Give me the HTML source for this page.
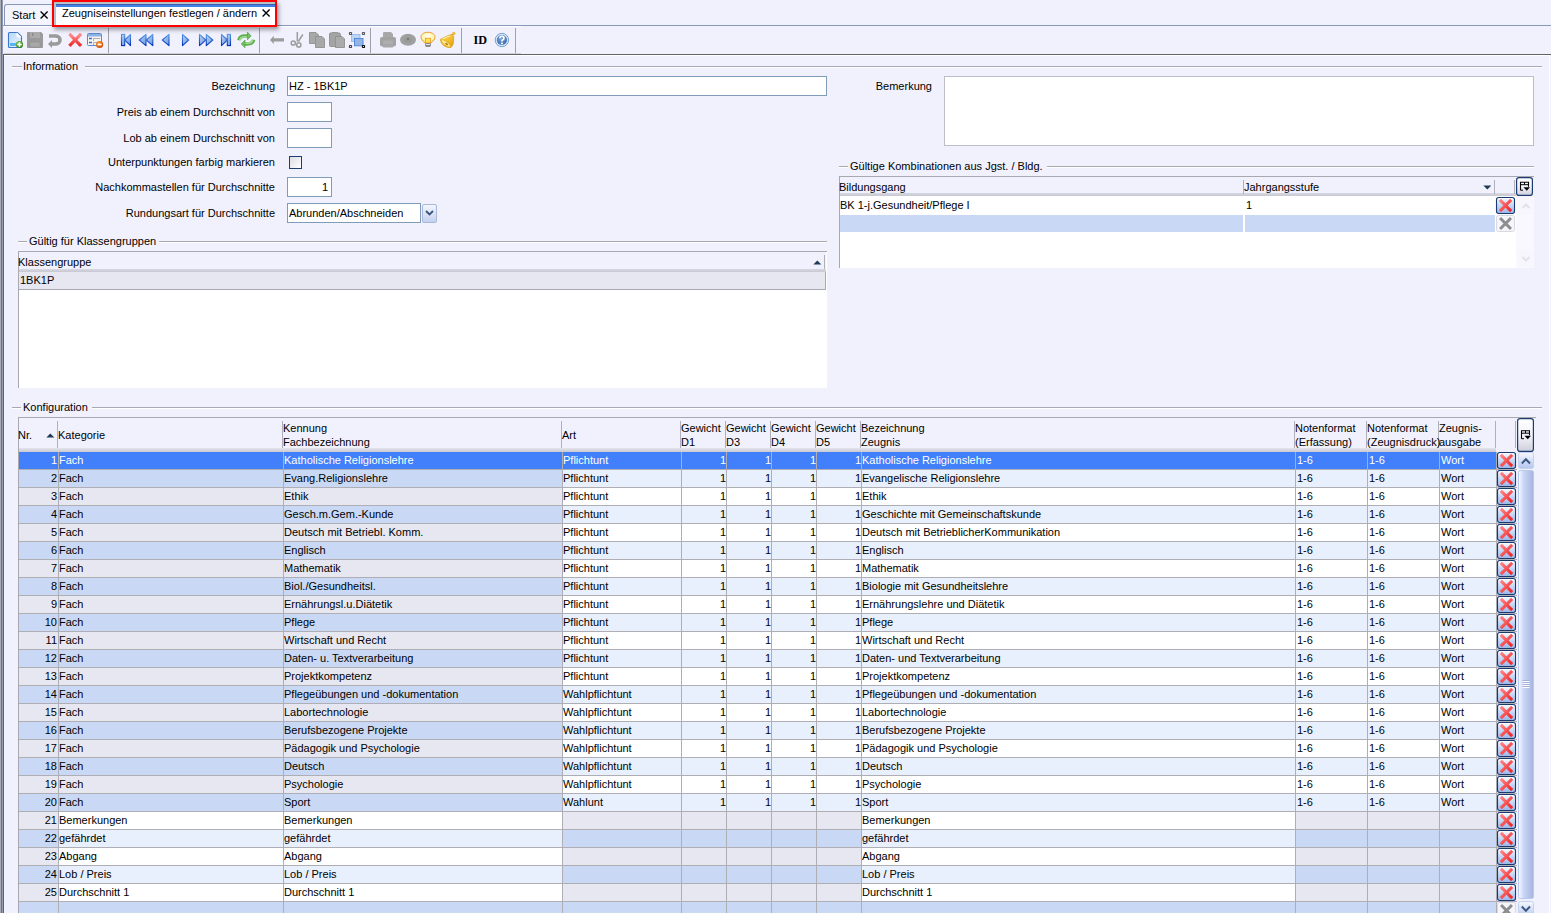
<!DOCTYPE html>
<html><head><meta charset="utf-8"><style>
html,body{margin:0;padding:0}
body{width:1551px;height:913px;overflow:hidden;position:relative;background:#F1F1FE;font-family:"Liberation Sans",sans-serif;font-size:11px;color:#000}
.a{position:absolute}
.t{position:absolute;white-space:pre;line-height:13px}
svg{position:absolute;overflow:visible}
</style></head><body>

<div class="a" style="left:0px;top:0px;width:1px;height:913px;background:#ABABB0"></div>
<div class="a" style="left:1px;top:0px;width:1px;height:913px;background:#6C7480"></div>
<div class="a" style="left:2px;top:0px;width:1px;height:913px;background:#8C9CB8"></div>
<div class="a" style="left:3px;top:25px;width:1548px;height:1px;background:#8898B8"></div>
<div class="a" style="left:4px;top:4px;width:50px;height:21px;border:1px solid #8898B8;border-bottom:none;border-radius:3px 3px 0 0;background:#F4F4FE;box-sizing:border-box"></div>
<div class="t" style="left:12px;top:9px;">Start</div>
<svg style="left:40px;top:11px" width="9" height="8" viewBox="0 0 9 8"><path d="M0.6 0.6L7.6 7.4M7.6 0.6L0.6 7.4" stroke="#000" stroke-width="1.35"/></svg>
<div class="a" style="left:54px;top:2px;width:221px;height:23px;background:#fff;border-left:2px solid #B8C0C8;border-top:2px solid #B8C0C8;box-sizing:border-box"></div>
<div class="a" style="left:56px;top:4px;width:219px;height:1px;background:#3C5FA8"></div>
<div class="a" style="left:56px;top:5px;width:219px;height:2px;background:#4080E8"></div>
<div class="a" style="left:54px;top:25px;width:222px;height:1px;background:#fff"></div>
<div class="t" style="left:62px;top:7px;">Zeugniseinstellungen festlegen / ändern</div>
<svg style="left:262px;top:9px" width="9" height="8" viewBox="0 0 9 8"><path d="M0.6 0.6L7.6 7.4M7.6 0.6L0.6 7.4" stroke="#000" stroke-width="1.35"/></svg>
<div class="a" style="left:4px;top:26px;width:517px;height:1px;background:#FFFFFF"></div>
<div class="a" style="left:4px;top:53px;width:517px;height:1px;background:#CFCFD8"></div>
<div class="a" style="left:108px;top:28px;width:1px;height:25px;background:#A0A0A8"></div>
<div class="a" style="left:259px;top:28px;width:1px;height:25px;background:#A0A0A8"></div>
<div class="a" style="left:370px;top:28px;width:1px;height:25px;background:#A0A0A8"></div>
<div class="a" style="left:461px;top:28px;width:1px;height:25px;background:#A0A0A8"></div>
<div class="a" style="left:515px;top:28px;width:1px;height:25px;background:#A0A0A8"></div>
<svg style="left:0;top:0" width="530" height="54" viewBox="0 0 530 54">
<defs>
<linearGradient id="gb" x1="0" y1="0" x2="0" y2="1"><stop offset="0" stop-color="#5C98E8"/><stop offset="1" stop-color="#0030B8"/></linearGradient>
<linearGradient id="gbf" x1="0" y1="0" x2="1" y2="1"><stop offset="0" stop-color="#B8D4F4"/><stop offset="1" stop-color="#6C9CE0"/></linearGradient>
<linearGradient id="gdoc" x1="0" y1="0" x2="1" y2="1"><stop offset="0" stop-color="#B8D8F8"/><stop offset="1" stop-color="#E8F4FF"/></linearGradient>
<radialGradient id="ggreen" cx="0.4" cy="0.35" r="0.7"><stop offset="0" stop-color="#8CD068"/><stop offset="1" stop-color="#2E7A18"/></radialGradient>
<radialGradient id="gorange" cx="0.4" cy="0.35" r="0.7"><stop offset="0" stop-color="#FFA040"/><stop offset="1" stop-color="#C84800"/></radialGradient>
<linearGradient id="gred" x1="0" y1="0" x2="0" y2="1"><stop offset="0" stop-color="#FF8A8A"/><stop offset="1" stop-color="#F03030"/></linearGradient>
<linearGradient id="ggr" x1="0" y1="0" x2="0" y2="1"><stop offset="0" stop-color="#9ED890"/><stop offset="1" stop-color="#3C9A30"/></linearGradient>
<radialGradient id="gbulb" cx="0.5" cy="0.4" r="0.6"><stop offset="0" stop-color="#FFFFF0"/><stop offset="0.7" stop-color="#FFF6B0"/><stop offset="1" stop-color="#F8D060"/></radialGradient>
<linearGradient id="gbell" x1="0" y1="0" x2="1" y2="1"><stop offset="0" stop-color="#FFE060"/><stop offset="0.6" stop-color="#F0B828"/><stop offset="1" stop-color="#D89818"/></linearGradient>
<radialGradient id="ghelp" cx="0.45" cy="0.35" r="0.65"><stop offset="0" stop-color="#7EA8DC"/><stop offset="1" stop-color="#3A6AB0"/></radialGradient>
</defs>
<path d="M8.5 33.5 Q8.5 32.5 9.5 32.5 H17.5 L21.5 36.5 V46.5 Q21.5 47.5 20.5 47.5 H9.5 Q8.5 47.5 8.5 46.5Z" fill="url(#gdoc)" stroke="#3C78C8" stroke-width="1.1"/>
<path d="M17 32.8 V37 H21.2" fill="#fff" stroke="#fff" stroke-width="0.8"/>
<rect x="10" y="43" width="6" height="3" fill="#5AB4F4"/>
<circle cx="19.5" cy="44.5" r="3.6" fill="url(#ggreen)"/>
<path d="M19.5 42.3V46.7M17.3 44.5H21.7" stroke="#fff" stroke-width="1.5"/>
<path d="M27 33 Q27 32 28 32 H41 L43 34 V47 Q43 48 42 48 H28 Q27 48 27 47Z" fill="#9A9A9A"/>
<rect x="30" y="32" width="10" height="6" fill="#ABABAB"/>
<rect x="32" y="33" width="1.3" height="3" fill="#888"/>
<rect x="30" y="42" width="10" height="5" fill="#A8A8A8" stroke="#8E8E8E" stroke-width="0.6"/>
<path d="M49 36 H56 A4 4 0 0 1 56 44 H52" fill="none" stroke="#9A9A9A" stroke-width="3.6"/>
<path d="M48 44 L52 40 V48Z" fill="#9A9A9A"/>
<path d="M70.5 35 L80 44.8 M80 35 L70.5 44.8" stroke="url(#gred)" stroke-width="3.2" stroke-linecap="square"/>
<rect x="87.5" y="33.5" width="14" height="12" rx="1" fill="#F6F4EC" stroke="#5A8AD0" stroke-width="1"/>
<rect x="88" y="34" width="13" height="2.5" fill="#8CB2EA"/>
<path d="M89 38.5H92M89 42.5H92" stroke="#3A6AD0" stroke-width="1.3"/>
<path d="M93.5 41V38.5H100M93.5 45V42.5H98" fill="none" stroke="#A8A8A8" stroke-width="0.9"/>
<circle cx="99.6" cy="44.5" r="3.6" fill="url(#gorange)"/>
<path d="M97.6 44.5H101.6" stroke="#fff" stroke-width="1.6"/>
<rect x="121.5" y="34.4" width="3.2" height="11.2" fill="url(#gbf)" stroke="url(#gb)" stroke-width="1.1"/>
<path d="M124.8 40.0 L130.5 34.4 V45.6Z" fill="url(#gbf)" stroke="url(#gb)" stroke-width="1.1" stroke-linejoin="round"/>
<path d="M139.3 40.0 L146 34.4 V45.6Z" fill="url(#gbf)" stroke="url(#gb)" stroke-width="1.1" stroke-linejoin="round"/>
<path d="M146.3 40.0 L152.8 34.4 V45.6Z" fill="url(#gbf)" stroke="url(#gb)" stroke-width="1.1" stroke-linejoin="round"/>
<path d="M162.3 40.0 L169 34.4 V45.6Z" fill="url(#gbf)" stroke="url(#gb)" stroke-width="1.1" stroke-linejoin="round"/>
<path d="M188.6 40.0 L182.5 34.4 V45.6Z" fill="url(#gbf)" stroke="url(#gb)" stroke-width="1.1" stroke-linejoin="round"/>
<path d="M205.8 40.0 L199.5 34.4 V45.6Z" fill="url(#gbf)" stroke="url(#gb)" stroke-width="1.1" stroke-linejoin="round"/>
<path d="M212.8 40.0 L206.3 34.4 V45.6Z" fill="url(#gbf)" stroke="url(#gb)" stroke-width="1.1" stroke-linejoin="round"/>
<path d="M227.3 40.0 L221.5 34.4 V45.6Z" fill="url(#gbf)" stroke="url(#gb)" stroke-width="1.1" stroke-linejoin="round"/>
<rect x="227.3" y="34.4" width="3.2" height="11.2" fill="url(#gbf)" stroke="url(#gb)" stroke-width="1.1"/>
<path d="M238.9 40.2 Q239.4 36 245.2 36 H248.2" fill="none" stroke="#5EAE4E" stroke-width="3.4"/>
<path d="M239.8 39.8 Q240.3 36.8 245.2 36.8 H248.2" fill="none" stroke="#A8DC98" stroke-width="1.5"/>
<path d="M247.4 32 L251.2 35.9 L247.4 39.8Z" fill="#72BE62" stroke="#4C9C3C" stroke-width="0.6" stroke-linejoin="round"/>
<path d="M253.6 39.8 Q253.1 44 247 44 H244.4" fill="none" stroke="#5EAE4E" stroke-width="3.4"/>
<path d="M252.7 40.2 Q252.2 43.2 247 43.2 H244.4" fill="none" stroke="#A8DC98" stroke-width="1.5"/>
<path d="M245 40 L241.2 43.9 L245 47.8Z" fill="#72BE62" stroke="#4C9C3C" stroke-width="0.6" stroke-linejoin="round"/>
<path d="M270 40 L273.8 35.8 V38.2 H284 V41.6 H273.8 V44 Z" fill="#9C9C9C"/>
<path d="M297.3 32 V41.5 M302.8 34.5 L298.3 41.5" stroke="#9C9C9C" stroke-width="1.5" fill="none"/>
<circle cx="293.3" cy="43" r="2.1" fill="none" stroke="#9C9C9C" stroke-width="1.5"/>
<circle cx="298.8" cy="44.9" r="2.1" fill="none" stroke="#9C9C9C" stroke-width="1.5"/>
<path d="M309.5 32.5 H316 L318.5 35 V43.5 H309.5Z" fill="#A8A8A8" stroke="#909090" stroke-width="0.9"/>
<path d="M315.5 36.5 H322 L324.5 39 V47.5 H315.5Z" fill="#A8A8A8" stroke="#909090" stroke-width="0.9"/>
<path d="M329.5 34 Q329.5 33 330.5 33 H332 V32.5 H337.5 V33 H339 Q340.5 33 340.5 34.5 V46.5 H330.5 Q329.5 46.5 329.5 45.5Z" fill="#A4A4A4" stroke="#909090" stroke-width="0.9"/>
<path d="M335.5 36.5 H342 L344.5 39 V47.5 H335.5Z" fill="#ABABAB" stroke="#909090" stroke-width="0.9"/>
<rect x="351.5" y="34.5" width="8.5" height="7" fill="#BCD4F6" stroke="#8CB8F0" stroke-width="0.8"/>
<rect x="354.5" y="38.5" width="8.5" height="7.3" fill="#94B4E8" stroke="#4C84D8" stroke-width="0.9"/>
<rect x="348.9" y="31.9" width="3.2" height="3.2" rx="0.8" fill="#5A5A5A"/><rect x="350.0" y="33.0" width="1" height="1" fill="#ddd"/>
<rect x="361.9" y="31.9" width="3.2" height="3.2" rx="0.8" fill="#5A5A5A"/><rect x="363.0" y="33.0" width="1" height="1" fill="#ddd"/>
<rect x="348.9" y="44.9" width="3.2" height="3.2" rx="0.8" fill="#444"/><rect x="350.0" y="46.0" width="1" height="1" fill="#ddd"/>
<rect x="361.9" y="44.9" width="3.2" height="3.2" rx="0.8" fill="#111"/><rect x="363.0" y="46.0" width="1" height="1" fill="#ddd"/>
<path d="M383 33 Q383 32 384.5 32 H391 L393 34 V38 H383Z" fill="#A8A8A8"/>
<rect x="380" y="37" width="16" height="9.5" rx="2" fill="#A2A2A2"/>
<rect x="383" y="40.5" width="10" height="3.5" fill="#AEAEAE"/>
<rect x="383" y="44.5" width="10" height="3" fill="#A8A8A8"/>
<ellipse cx="408" cy="39.8" rx="8" ry="6" fill="#A0A0A0"/>
<ellipse cx="408" cy="39.8" rx="4" ry="3" fill="#989898"/>
<circle cx="408" cy="39" r="0.9" fill="#6A6A6A"/>
<path d="M428 32.3 C432.6 32.3 435 34.6 435 37.2 C435 39.4 433.2 40.8 431.3 42.8 H424.7 C422.8 40.8 421 39.4 421 37.2 C421 34.6 423.4 32.3 428 32.3Z" fill="url(#gbulb)" stroke="#EE9A38" stroke-width="1"/>
<rect x="425.4" y="38.2" width="5.2" height="4.8" fill="#FFE448" stroke="#F08C28" stroke-width="0.7"/>
<rect x="425.3" y="43" width="5.4" height="3.8" rx="1" fill="#6C6C6C"/>
<rect x="426" y="43.8" width="4" height="1.4" fill="#E8E8E8"/>
<path d="M452.3 34.2 Q446.5 35.8 440.3 39.4 Q440.8 44 444.6 46.2 Q447.6 47.8 450.9 47.6 Q453.6 45.2 453.6 40.5 Q454.2 36.6 452.3 34.2Z" fill="url(#gbell)" stroke="#D8A018" stroke-width="0.8" stroke-linejoin="round"/>
<ellipse cx="445.8" cy="43.4" rx="5.6" ry="1.9" transform="rotate(37 445.8 43.4)" fill="#FFE88A" stroke="#E0A820" stroke-width="0.6"/>
<ellipse cx="446.6" cy="44" rx="1.6" ry="1" transform="rotate(37 446.6 44)" fill="#B88010"/>
<path d="M442.5 39 Q446 37 450.5 35.8" fill="none" stroke="#FFF4B0" stroke-width="1"/>
<circle cx="453.8" cy="33.5" r="1.3" fill="#F4C838" stroke="#D8A018" stroke-width="0.6"/>
<text x="473.5" y="44" font-family="Liberation Serif" font-weight="bold" font-size="11.5" fill="#000" textLength="13.5" lengthAdjust="spacingAndGlyphs">ID</text>
<circle cx="501.9" cy="40" r="6.7" fill="#D8E6F6" stroke="#6A98D0" stroke-width="0.9"/>
<circle cx="501.9" cy="40" r="5.1" fill="url(#ghelp)"/>
<path d="M499.9 38.3 Q499.9 36.3 501.9 36.3 Q504 36.3 504 38.2 Q504 39.4 502.6 40 Q501.9 40.4 501.9 41.4" fill="none" stroke="#fff" stroke-width="1.6"/>
<rect x="501" y="42.6" width="1.9" height="1.6" fill="#fff"/>
</svg>
<div class="a" style="left:3px;top:54px;width:1548px;height:1px;background:#646464"></div>
<div class="a" style="left:4px;top:55px;width:1546px;height:1px;background:#FFFFFF"></div>
<div class="a" style="left:3px;top:54px;width:1px;height:859px;background:#646464"></div>
<div class="a" style="left:1549px;top:55px;width:1px;height:858px;background:#FFFFFF"></div>
<div class="a" style="left:12px;top:66px;width:10px;height:1px;background:#A8A8B0"></div>
<div class="a" style="left:12px;top:67px;width:10px;height:1px;background:#FFFFFF"></div>
<div class="t" style="left:23px;top:60px;">Information</div>
<div class="a" style="left:85px;top:66px;width:1457px;height:1px;background:#A8A8B0"></div>
<div class="a" style="left:85px;top:67px;width:1457px;height:1px;background:#FFFFFF"></div>
<div class="t" style="right:1276px;top:80px;">Bezeichnung</div>
<div class="t" style="right:1276px;top:106px;">Preis ab einem Durchschnitt von</div>
<div class="t" style="right:1276px;top:132px;">Lob ab einem Durchschnitt von</div>
<div class="t" style="right:1276px;top:156px;">Unterpunktungen farbig markieren</div>
<div class="t" style="right:1276px;top:181px;">Nachkommastellen für Durchschnitte</div>
<div class="t" style="right:1276px;top:207px;">Rundungsart für Durchschnitte</div>
<div class="a" style="left:287px;top:76px;width:540px;height:20px;background:#fff;border:1px solid #7F9DB9;box-sizing:border-box"></div>
<div class="t" style="left:289px;top:80px;">HZ - 1BK1P</div>
<div class="a" style="left:287px;top:102px;width:45px;height:20px;background:#fff;border:1px solid #7F9DB9;box-sizing:border-box"></div>
<div class="a" style="left:287px;top:128px;width:45px;height:20px;background:#fff;border:1px solid #7F9DB9;box-sizing:border-box"></div>
<div class="a" style="left:289px;top:156px;width:13px;height:13px;border:1px solid #1C3F70;box-sizing:border-box;background:linear-gradient(135deg,#DCDCE4,#FFFFFF)"></div>
<div class="a" style="left:287px;top:177px;width:45px;height:20px;background:#fff;border:1px solid #7F9DB9;box-sizing:border-box"></div>
<div class="t" style="right:1223px;top:181px;">1</div>
<div class="a" style="left:287px;top:203px;width:134px;height:20px;background:#fff;border:1px solid #7F9DB9;box-sizing:border-box"></div>
<div class="t" style="left:289px;top:207px;">Abrunden/Abschneiden</div>
<div class="a" style="left:422px;top:204px;width:15px;height:19px;border:1px solid #A8B8D8;border-radius:2px;box-sizing:border-box;background:linear-gradient(#F4F6FE,#C4D0EE)"></div>
<svg style="left:425px;top:210px" width="9" height="6" viewBox="0 0 9 6"><path d="M1 1L4.5 4.5L8 1" stroke="#3B5578" stroke-width="1.8" fill="none"/></svg>
<div class="t" style="right:619px;top:80px;">Bemerkung</div>
<div class="a" style="left:944px;top:76px;width:590px;height:70px;background:#fff;border:1px solid #BEBEC8;box-sizing:border-box"></div>
<div class="a" style="left:18px;top:241px;width:9px;height:1px;background:#A8A8B0"></div>
<div class="a" style="left:18px;top:242px;width:9px;height:1px;background:#FFFFFF"></div>
<div class="t" style="left:29px;top:235px;">Gültig für Klassengruppen</div>
<div class="a" style="left:159px;top:241px;width:668px;height:1px;background:#A8A8B0"></div>
<div class="a" style="left:159px;top:242px;width:668px;height:1px;background:#FFFFFF"></div>
<div class="a" style="left:18px;top:251px;width:809px;height:137px;background:#fff"></div>
<div class="a" style="left:18px;top:251px;width:809px;height:1px;background:#A8A8B0"></div>
<div class="a" style="left:18px;top:251px;width:1px;height:137px;background:#A8A8B0"></div>
<div class="a" style="left:19px;top:252px;width:807px;height:17px;background:#F1F1FE"></div>
<div class="a" style="left:19px;top:269px;width:807px;height:3px;background:linear-gradient(#D8D8E2,#C8C8D2)"></div>
<div class="t" style="left:18px;top:256px;">Klassengruppe</div>
<div class="a" style="left:824px;top:255px;width:1px;height:14px;background:#B0B0B8"></div>
<svg style="left:813px;top:260px" width="9" height="5" viewBox="0 0 9 5"><path d="M0.3 4.6L4.3 0.4L8.3 4.6Z" fill="#1F3A55"/></svg>
<div class="a" style="left:19px;top:272px;width:807px;height:17px;background:#E7E7F1"></div>
<div class="a" style="left:19px;top:289px;width:807px;height:1px;background:#A8A8B0"></div>
<div class="a" style="left:825px;top:272px;width:1px;height:18px;background:#A8A8B0"></div>
<div class="t" style="left:20px;top:274px;">1BK1P</div>
<div class="a" style="left:839px;top:166px;width:9px;height:1px;background:#A8A8B0"></div>
<div class="a" style="left:839px;top:167px;width:9px;height:1px;background:#FFFFFF"></div>
<div class="t" style="left:850px;top:160px;">Gültige Kombinationen aus Jgst. / Bldg.</div>
<div class="a" style="left:1047px;top:166px;width:487px;height:1px;background:#A8A8B0"></div>
<div class="a" style="left:1047px;top:167px;width:487px;height:1px;background:#FFFFFF"></div>
<div class="a" style="left:839px;top:176px;width:695px;height:92px;background:#fff"></div>
<div class="a" style="left:839px;top:176px;width:695px;height:1px;background:#A8A8B0"></div>
<div class="a" style="left:839px;top:176px;width:1px;height:92px;background:#A8A8B0"></div>
<div class="a" style="left:840px;top:177px;width:676px;height:16px;background:#F1F1FE"></div>
<div class="a" style="left:840px;top:193px;width:676px;height:3px;background:linear-gradient(#D8D8E2,#C8C8D2)"></div>
<div class="a" style="left:1516px;top:177px;width:18px;height:20px;background:#F1F1FE"></div>
<div class="a" style="left:1516px;top:197px;width:18px;height:71px;background:#F8F8FE"></div>
<div class="t" style="left:839px;top:181px;">Bildungsgang</div>
<div class="t" style="left:1244px;top:181px;">Jahrgangsstufe</div>
<div class="a" style="left:1243px;top:180px;width:1px;height:14px;background:#B0B0B8"></div>
<div class="a" style="left:1494px;top:180px;width:1px;height:14px;background:#B0B0B8"></div>
<div class="a" style="left:1514px;top:180px;width:1px;height:14px;background:#B0B0B8"></div>
<svg style="left:1483px;top:185px" width="9" height="5" viewBox="0 0 9 5"><path d="M0.3 0.4L4.3 4.6L8.3 0.4Z" fill="#1F3A55"/></svg>
<div class="t" style="left:840px;top:199px;">BK 1-j.Gesundheit/Pflege I</div>
<div class="t" style="left:1246px;top:199px;">1</div>
<div class="a" style="left:840px;top:215px;width:403px;height:17px;background:#C9D9F5"></div>
<div class="a" style="left:1245px;top:215px;width:250px;height:17px;background:#C9D9F5"></div>
<svg style="left:0;top:0" width="1551" height="913" viewBox="0 0 1551 913">
<defs>
<linearGradient id="gdel" x1="0" y1="0" x2="0" y2="1"><stop offset="0" stop-color="#FFFFFF"/><stop offset="0.25" stop-color="#DCE8FC"/><stop offset="1" stop-color="#98B6EA"/></linearGradient>
<linearGradient id="gcfg" x1="0" y1="0" x2="0" y2="1"><stop offset="0" stop-color="#FFFFFF"/><stop offset="0.5" stop-color="#F4F4FA"/><stop offset="1" stop-color="#CFCFDC"/></linearGradient>
<linearGradient id="gthumb" x1="0" y1="0" x2="1" y2="0"><stop offset="0" stop-color="#F8FAFF"/><stop offset="0.35" stop-color="#C8D6F8"/><stop offset="1" stop-color="#A4B4DC"/></linearGradient>
<linearGradient id="gsbtn" x1="0" y1="0" x2="0" y2="1"><stop offset="0" stop-color="#F6F8FE"/><stop offset="1" stop-color="#B4C6EE"/></linearGradient>
<linearGradient id="gsbtnd" x1="0" y1="0" x2="0" y2="1"><stop offset="0" stop-color="#FAFAFE"/><stop offset="1" stop-color="#E2E2EC"/></linearGradient>
<linearGradient id="gredx" x1="0" y1="0" x2="1" y2="1"><stop offset="0" stop-color="#FF7E7E"/><stop offset="1" stop-color="#F02A2A"/></linearGradient>
</defs>
<rect x="1516.6" y="177.6" width="15.8" height="17.8" rx="2.5" fill="url(#gcfg)" stroke="#1C3C74" stroke-width="1.2"/><path d="M1520.5 190.2 V182.2 H1528.5 V186.7" fill="none" stroke="#000" stroke-width="1.1"/><path d="M1520.5 184.7 H1528.5 M1524.5 182.2 V184.7" stroke="#000" stroke-width="1"/><path d="M1520.5 190.2 H1523" stroke="#000" stroke-width="1"/><path d="M1523.5 187.2 H1530 L1526.75 190.7Z" fill="#000"/>
<rect x="1496.5" y="197.5" width="18" height="16" rx="2.2" fill="url(#gdel)" stroke="#1A3A72" stroke-width="1.1"/><path d="M1500.9 200.9 L1510.1 210.1 M1510.1 200.9 L1500.9 210.1" stroke="url(#gredx)" stroke-width="3" stroke-linecap="square"/>
<rect x="1496.5" y="215.5" width="18" height="16" rx="2" fill="#F6F6FA" stroke="#D8D8E0" stroke-width="1"/><path d="M1501.1 219.1 L1509.9 227.9 M1509.9 219.1 L1501.1 227.9" stroke="#8E8E8E" stroke-width="2.9" stroke-linecap="square"/>
<rect x="1519" y="198" width="14" height="16" fill="#F6F6FC"/>
<path d="M1522.5 208 L1526 204.5 L1529.5 208" fill="none" stroke="#E0E0E8" stroke-width="1.8"/>
<rect x="1519" y="250" width="14" height="17" fill="#F6F6FC"/>
<path d="M1522.5 257 L1526 260.5 L1529.5 257" fill="none" stroke="#E0E0E8" stroke-width="1.8"/>
</svg>
<div class="a" style="left:12px;top:407px;width:9px;height:1px;background:#A8A8B0"></div>
<div class="a" style="left:12px;top:408px;width:9px;height:1px;background:#FFFFFF"></div>
<div class="t" style="left:23px;top:401px;">Konfiguration</div>
<div class="a" style="left:92px;top:407px;width:1450px;height:1px;background:#A8A8B0"></div>
<div class="a" style="left:92px;top:408px;width:1450px;height:1px;background:#FFFFFF"></div>
<div class="a" style="left:18px;top:417px;width:1518px;height:1px;background:#A8A8B0"></div>
<div class="a" style="left:18px;top:417px;width:1px;height:496px;background:#A8A8B0"></div>
<div class="a" style="left:19px;top:418px;width:1477px;height:30px;background:#F1F1FE"></div>
<div class="a" style="left:19px;top:448px;width:1477px;height:4px;background:linear-gradient(#E4E4EC,#C8C8D2)"></div>
<div class="a" style="left:57px;top:421px;width:1px;height:27px;background:#B0B0B8"></div>
<div class="a" style="left:282px;top:421px;width:1px;height:27px;background:#B0B0B8"></div>
<div class="a" style="left:561px;top:421px;width:1px;height:27px;background:#B0B0B8"></div>
<div class="a" style="left:680px;top:421px;width:1px;height:27px;background:#B0B0B8"></div>
<div class="a" style="left:725px;top:421px;width:1px;height:27px;background:#B0B0B8"></div>
<div class="a" style="left:770px;top:421px;width:1px;height:27px;background:#B0B0B8"></div>
<div class="a" style="left:815px;top:421px;width:1px;height:27px;background:#B0B0B8"></div>
<div class="a" style="left:860px;top:421px;width:1px;height:27px;background:#B0B0B8"></div>
<div class="a" style="left:1294px;top:421px;width:1px;height:27px;background:#B0B0B8"></div>
<div class="a" style="left:1366px;top:421px;width:1px;height:27px;background:#B0B0B8"></div>
<div class="a" style="left:1438px;top:421px;width:1px;height:27px;background:#B0B0B8"></div>
<div class="a" style="left:1495px;top:421px;width:1px;height:27px;background:#B0B0B8"></div>
<div class="a" style="left:1515px;top:421px;width:1px;height:27px;background:#B0B0B8"></div>
<div class="t" style="left:18px;top:429px;">Nr.</div>
<svg style="left:46px;top:433px" width="9" height="5" viewBox="0 0 9 5"><path d="M0.3 4.6L4.3 0.4L8.3 4.6Z" fill="#1F3A55"/></svg>
<div class="t" style="left:58px;top:429px;">Kategorie</div>
<div class="t" style="left:283px;top:422px;">Kennung</div>
<div class="t" style="left:283px;top:436px;">Fachbezeichnung</div>
<div class="t" style="left:562px;top:429px;">Art</div>
<div class="t" style="left:681px;top:422px;">Gewicht</div>
<div class="t" style="left:681px;top:436px;">D1</div>
<div class="t" style="left:726px;top:422px;">Gewicht</div>
<div class="t" style="left:726px;top:436px;">D3</div>
<div class="t" style="left:771px;top:422px;">Gewicht</div>
<div class="t" style="left:771px;top:436px;">D4</div>
<div class="t" style="left:816px;top:422px;">Gewicht</div>
<div class="t" style="left:816px;top:436px;">D5</div>
<div class="t" style="left:861px;top:422px;">Bezeichnung</div>
<div class="t" style="left:861px;top:436px;">Zeugnis</div>
<div class="t" style="left:1295px;top:422px;">Notenformat</div>
<div class="t" style="left:1295px;top:436px;">(Erfassung)</div>
<div class="t" style="left:1367px;top:422px;">Notenformat</div>
<div class="t" style="left:1367px;top:436px;">(Zeugnisdruck)</div>
<div class="t" style="left:1439px;top:422px;">Zeugnis-</div>
<div class="t" style="left:1439px;top:436px;">ausgabe</div>
<div class="a" style="left:19px;top:452px;width:39px;height:17px;background:#4180FA"></div>
<div class="a" style="left:59px;top:452px;width:224px;height:17px;background:#4180FA"></div>
<div class="a" style="left:284px;top:452px;width:278px;height:17px;background:#4180FA"></div>
<div class="a" style="left:563px;top:452px;width:118px;height:17px;background:#4180FA"></div>
<div class="a" style="left:682px;top:452px;width:44px;height:17px;background:#4180FA"></div>
<div class="a" style="left:727px;top:452px;width:44px;height:17px;background:#4180FA"></div>
<div class="a" style="left:772px;top:452px;width:44px;height:17px;background:#4180FA"></div>
<div class="a" style="left:817px;top:452px;width:44px;height:17px;background:#4180FA"></div>
<div class="a" style="left:862px;top:452px;width:433px;height:17px;background:#4180FA"></div>
<div class="a" style="left:1296px;top:452px;width:71px;height:17px;background:#4180FA"></div>
<div class="a" style="left:1368px;top:452px;width:71px;height:17px;background:#4180FA"></div>
<div class="a" style="left:1440px;top:452px;width:56px;height:17px;background:#4180FA"></div>
<div class="a" style="left:19px;top:469px;width:1498px;height:1px;background:#AEAEB4"></div>
<div class="a" style="left:19px;top:470px;width:39px;height:17px;background:#C9D9F5"></div>
<div class="a" style="left:59px;top:470px;width:224px;height:17px;background:#C9D9F5"></div>
<div class="a" style="left:284px;top:470px;width:278px;height:17px;background:#C9D9F5"></div>
<div class="a" style="left:563px;top:470px;width:118px;height:17px;background:#E9F0FD"></div>
<div class="a" style="left:682px;top:470px;width:44px;height:17px;background:#E9F0FD"></div>
<div class="a" style="left:727px;top:470px;width:44px;height:17px;background:#E9F0FD"></div>
<div class="a" style="left:772px;top:470px;width:44px;height:17px;background:#E9F0FD"></div>
<div class="a" style="left:817px;top:470px;width:44px;height:17px;background:#E9F0FD"></div>
<div class="a" style="left:862px;top:470px;width:433px;height:17px;background:#E9F0FD"></div>
<div class="a" style="left:1296px;top:470px;width:71px;height:17px;background:#E9F0FD"></div>
<div class="a" style="left:1368px;top:470px;width:71px;height:17px;background:#E9F0FD"></div>
<div class="a" style="left:1440px;top:470px;width:56px;height:17px;background:#E9F0FD"></div>
<div class="a" style="left:19px;top:487px;width:1498px;height:1px;background:#AEAEB4"></div>
<div class="a" style="left:19px;top:488px;width:39px;height:17px;background:#E7E7F1"></div>
<div class="a" style="left:59px;top:488px;width:224px;height:17px;background:#E7E7F1"></div>
<div class="a" style="left:284px;top:488px;width:278px;height:17px;background:#E7E7F1"></div>
<div class="a" style="left:563px;top:488px;width:118px;height:17px;background:#FFFFFF"></div>
<div class="a" style="left:682px;top:488px;width:44px;height:17px;background:#FFFFFF"></div>
<div class="a" style="left:727px;top:488px;width:44px;height:17px;background:#FFFFFF"></div>
<div class="a" style="left:772px;top:488px;width:44px;height:17px;background:#FFFFFF"></div>
<div class="a" style="left:817px;top:488px;width:44px;height:17px;background:#FFFFFF"></div>
<div class="a" style="left:862px;top:488px;width:433px;height:17px;background:#FFFFFF"></div>
<div class="a" style="left:1296px;top:488px;width:71px;height:17px;background:#FFFFFF"></div>
<div class="a" style="left:1368px;top:488px;width:71px;height:17px;background:#FFFFFF"></div>
<div class="a" style="left:1440px;top:488px;width:56px;height:17px;background:#FFFFFF"></div>
<div class="a" style="left:19px;top:505px;width:1498px;height:1px;background:#AEAEB4"></div>
<div class="a" style="left:19px;top:506px;width:39px;height:17px;background:#C9D9F5"></div>
<div class="a" style="left:59px;top:506px;width:224px;height:17px;background:#C9D9F5"></div>
<div class="a" style="left:284px;top:506px;width:278px;height:17px;background:#C9D9F5"></div>
<div class="a" style="left:563px;top:506px;width:118px;height:17px;background:#E9F0FD"></div>
<div class="a" style="left:682px;top:506px;width:44px;height:17px;background:#E9F0FD"></div>
<div class="a" style="left:727px;top:506px;width:44px;height:17px;background:#E9F0FD"></div>
<div class="a" style="left:772px;top:506px;width:44px;height:17px;background:#E9F0FD"></div>
<div class="a" style="left:817px;top:506px;width:44px;height:17px;background:#E9F0FD"></div>
<div class="a" style="left:862px;top:506px;width:433px;height:17px;background:#E9F0FD"></div>
<div class="a" style="left:1296px;top:506px;width:71px;height:17px;background:#E9F0FD"></div>
<div class="a" style="left:1368px;top:506px;width:71px;height:17px;background:#E9F0FD"></div>
<div class="a" style="left:1440px;top:506px;width:56px;height:17px;background:#E9F0FD"></div>
<div class="a" style="left:19px;top:523px;width:1498px;height:1px;background:#AEAEB4"></div>
<div class="a" style="left:19px;top:524px;width:39px;height:17px;background:#E7E7F1"></div>
<div class="a" style="left:59px;top:524px;width:224px;height:17px;background:#E7E7F1"></div>
<div class="a" style="left:284px;top:524px;width:278px;height:17px;background:#E7E7F1"></div>
<div class="a" style="left:563px;top:524px;width:118px;height:17px;background:#FFFFFF"></div>
<div class="a" style="left:682px;top:524px;width:44px;height:17px;background:#FFFFFF"></div>
<div class="a" style="left:727px;top:524px;width:44px;height:17px;background:#FFFFFF"></div>
<div class="a" style="left:772px;top:524px;width:44px;height:17px;background:#FFFFFF"></div>
<div class="a" style="left:817px;top:524px;width:44px;height:17px;background:#FFFFFF"></div>
<div class="a" style="left:862px;top:524px;width:433px;height:17px;background:#FFFFFF"></div>
<div class="a" style="left:1296px;top:524px;width:71px;height:17px;background:#FFFFFF"></div>
<div class="a" style="left:1368px;top:524px;width:71px;height:17px;background:#FFFFFF"></div>
<div class="a" style="left:1440px;top:524px;width:56px;height:17px;background:#FFFFFF"></div>
<div class="a" style="left:19px;top:541px;width:1498px;height:1px;background:#AEAEB4"></div>
<div class="a" style="left:19px;top:542px;width:39px;height:17px;background:#C9D9F5"></div>
<div class="a" style="left:59px;top:542px;width:224px;height:17px;background:#C9D9F5"></div>
<div class="a" style="left:284px;top:542px;width:278px;height:17px;background:#C9D9F5"></div>
<div class="a" style="left:563px;top:542px;width:118px;height:17px;background:#E9F0FD"></div>
<div class="a" style="left:682px;top:542px;width:44px;height:17px;background:#E9F0FD"></div>
<div class="a" style="left:727px;top:542px;width:44px;height:17px;background:#E9F0FD"></div>
<div class="a" style="left:772px;top:542px;width:44px;height:17px;background:#E9F0FD"></div>
<div class="a" style="left:817px;top:542px;width:44px;height:17px;background:#E9F0FD"></div>
<div class="a" style="left:862px;top:542px;width:433px;height:17px;background:#E9F0FD"></div>
<div class="a" style="left:1296px;top:542px;width:71px;height:17px;background:#E9F0FD"></div>
<div class="a" style="left:1368px;top:542px;width:71px;height:17px;background:#E9F0FD"></div>
<div class="a" style="left:1440px;top:542px;width:56px;height:17px;background:#E9F0FD"></div>
<div class="a" style="left:19px;top:559px;width:1498px;height:1px;background:#AEAEB4"></div>
<div class="a" style="left:19px;top:560px;width:39px;height:17px;background:#E7E7F1"></div>
<div class="a" style="left:59px;top:560px;width:224px;height:17px;background:#E7E7F1"></div>
<div class="a" style="left:284px;top:560px;width:278px;height:17px;background:#E7E7F1"></div>
<div class="a" style="left:563px;top:560px;width:118px;height:17px;background:#FFFFFF"></div>
<div class="a" style="left:682px;top:560px;width:44px;height:17px;background:#FFFFFF"></div>
<div class="a" style="left:727px;top:560px;width:44px;height:17px;background:#FFFFFF"></div>
<div class="a" style="left:772px;top:560px;width:44px;height:17px;background:#FFFFFF"></div>
<div class="a" style="left:817px;top:560px;width:44px;height:17px;background:#FFFFFF"></div>
<div class="a" style="left:862px;top:560px;width:433px;height:17px;background:#FFFFFF"></div>
<div class="a" style="left:1296px;top:560px;width:71px;height:17px;background:#FFFFFF"></div>
<div class="a" style="left:1368px;top:560px;width:71px;height:17px;background:#FFFFFF"></div>
<div class="a" style="left:1440px;top:560px;width:56px;height:17px;background:#FFFFFF"></div>
<div class="a" style="left:19px;top:577px;width:1498px;height:1px;background:#AEAEB4"></div>
<div class="a" style="left:19px;top:578px;width:39px;height:17px;background:#C9D9F5"></div>
<div class="a" style="left:59px;top:578px;width:224px;height:17px;background:#C9D9F5"></div>
<div class="a" style="left:284px;top:578px;width:278px;height:17px;background:#C9D9F5"></div>
<div class="a" style="left:563px;top:578px;width:118px;height:17px;background:#E9F0FD"></div>
<div class="a" style="left:682px;top:578px;width:44px;height:17px;background:#E9F0FD"></div>
<div class="a" style="left:727px;top:578px;width:44px;height:17px;background:#E9F0FD"></div>
<div class="a" style="left:772px;top:578px;width:44px;height:17px;background:#E9F0FD"></div>
<div class="a" style="left:817px;top:578px;width:44px;height:17px;background:#E9F0FD"></div>
<div class="a" style="left:862px;top:578px;width:433px;height:17px;background:#E9F0FD"></div>
<div class="a" style="left:1296px;top:578px;width:71px;height:17px;background:#E9F0FD"></div>
<div class="a" style="left:1368px;top:578px;width:71px;height:17px;background:#E9F0FD"></div>
<div class="a" style="left:1440px;top:578px;width:56px;height:17px;background:#E9F0FD"></div>
<div class="a" style="left:19px;top:595px;width:1498px;height:1px;background:#AEAEB4"></div>
<div class="a" style="left:19px;top:596px;width:39px;height:17px;background:#E7E7F1"></div>
<div class="a" style="left:59px;top:596px;width:224px;height:17px;background:#E7E7F1"></div>
<div class="a" style="left:284px;top:596px;width:278px;height:17px;background:#E7E7F1"></div>
<div class="a" style="left:563px;top:596px;width:118px;height:17px;background:#FFFFFF"></div>
<div class="a" style="left:682px;top:596px;width:44px;height:17px;background:#FFFFFF"></div>
<div class="a" style="left:727px;top:596px;width:44px;height:17px;background:#FFFFFF"></div>
<div class="a" style="left:772px;top:596px;width:44px;height:17px;background:#FFFFFF"></div>
<div class="a" style="left:817px;top:596px;width:44px;height:17px;background:#FFFFFF"></div>
<div class="a" style="left:862px;top:596px;width:433px;height:17px;background:#FFFFFF"></div>
<div class="a" style="left:1296px;top:596px;width:71px;height:17px;background:#FFFFFF"></div>
<div class="a" style="left:1368px;top:596px;width:71px;height:17px;background:#FFFFFF"></div>
<div class="a" style="left:1440px;top:596px;width:56px;height:17px;background:#FFFFFF"></div>
<div class="a" style="left:19px;top:613px;width:1498px;height:1px;background:#AEAEB4"></div>
<div class="a" style="left:19px;top:614px;width:39px;height:17px;background:#C9D9F5"></div>
<div class="a" style="left:59px;top:614px;width:224px;height:17px;background:#C9D9F5"></div>
<div class="a" style="left:284px;top:614px;width:278px;height:17px;background:#C9D9F5"></div>
<div class="a" style="left:563px;top:614px;width:118px;height:17px;background:#E9F0FD"></div>
<div class="a" style="left:682px;top:614px;width:44px;height:17px;background:#E9F0FD"></div>
<div class="a" style="left:727px;top:614px;width:44px;height:17px;background:#E9F0FD"></div>
<div class="a" style="left:772px;top:614px;width:44px;height:17px;background:#E9F0FD"></div>
<div class="a" style="left:817px;top:614px;width:44px;height:17px;background:#E9F0FD"></div>
<div class="a" style="left:862px;top:614px;width:433px;height:17px;background:#E9F0FD"></div>
<div class="a" style="left:1296px;top:614px;width:71px;height:17px;background:#E9F0FD"></div>
<div class="a" style="left:1368px;top:614px;width:71px;height:17px;background:#E9F0FD"></div>
<div class="a" style="left:1440px;top:614px;width:56px;height:17px;background:#E9F0FD"></div>
<div class="a" style="left:19px;top:631px;width:1498px;height:1px;background:#AEAEB4"></div>
<div class="a" style="left:19px;top:632px;width:39px;height:17px;background:#E7E7F1"></div>
<div class="a" style="left:59px;top:632px;width:224px;height:17px;background:#E7E7F1"></div>
<div class="a" style="left:284px;top:632px;width:278px;height:17px;background:#E7E7F1"></div>
<div class="a" style="left:563px;top:632px;width:118px;height:17px;background:#FFFFFF"></div>
<div class="a" style="left:682px;top:632px;width:44px;height:17px;background:#FFFFFF"></div>
<div class="a" style="left:727px;top:632px;width:44px;height:17px;background:#FFFFFF"></div>
<div class="a" style="left:772px;top:632px;width:44px;height:17px;background:#FFFFFF"></div>
<div class="a" style="left:817px;top:632px;width:44px;height:17px;background:#FFFFFF"></div>
<div class="a" style="left:862px;top:632px;width:433px;height:17px;background:#FFFFFF"></div>
<div class="a" style="left:1296px;top:632px;width:71px;height:17px;background:#FFFFFF"></div>
<div class="a" style="left:1368px;top:632px;width:71px;height:17px;background:#FFFFFF"></div>
<div class="a" style="left:1440px;top:632px;width:56px;height:17px;background:#FFFFFF"></div>
<div class="a" style="left:19px;top:649px;width:1498px;height:1px;background:#AEAEB4"></div>
<div class="a" style="left:19px;top:650px;width:39px;height:17px;background:#C9D9F5"></div>
<div class="a" style="left:59px;top:650px;width:224px;height:17px;background:#C9D9F5"></div>
<div class="a" style="left:284px;top:650px;width:278px;height:17px;background:#C9D9F5"></div>
<div class="a" style="left:563px;top:650px;width:118px;height:17px;background:#E9F0FD"></div>
<div class="a" style="left:682px;top:650px;width:44px;height:17px;background:#E9F0FD"></div>
<div class="a" style="left:727px;top:650px;width:44px;height:17px;background:#E9F0FD"></div>
<div class="a" style="left:772px;top:650px;width:44px;height:17px;background:#E9F0FD"></div>
<div class="a" style="left:817px;top:650px;width:44px;height:17px;background:#E9F0FD"></div>
<div class="a" style="left:862px;top:650px;width:433px;height:17px;background:#E9F0FD"></div>
<div class="a" style="left:1296px;top:650px;width:71px;height:17px;background:#E9F0FD"></div>
<div class="a" style="left:1368px;top:650px;width:71px;height:17px;background:#E9F0FD"></div>
<div class="a" style="left:1440px;top:650px;width:56px;height:17px;background:#E9F0FD"></div>
<div class="a" style="left:19px;top:667px;width:1498px;height:1px;background:#AEAEB4"></div>
<div class="a" style="left:19px;top:668px;width:39px;height:17px;background:#E7E7F1"></div>
<div class="a" style="left:59px;top:668px;width:224px;height:17px;background:#E7E7F1"></div>
<div class="a" style="left:284px;top:668px;width:278px;height:17px;background:#E7E7F1"></div>
<div class="a" style="left:563px;top:668px;width:118px;height:17px;background:#FFFFFF"></div>
<div class="a" style="left:682px;top:668px;width:44px;height:17px;background:#FFFFFF"></div>
<div class="a" style="left:727px;top:668px;width:44px;height:17px;background:#FFFFFF"></div>
<div class="a" style="left:772px;top:668px;width:44px;height:17px;background:#FFFFFF"></div>
<div class="a" style="left:817px;top:668px;width:44px;height:17px;background:#FFFFFF"></div>
<div class="a" style="left:862px;top:668px;width:433px;height:17px;background:#FFFFFF"></div>
<div class="a" style="left:1296px;top:668px;width:71px;height:17px;background:#FFFFFF"></div>
<div class="a" style="left:1368px;top:668px;width:71px;height:17px;background:#FFFFFF"></div>
<div class="a" style="left:1440px;top:668px;width:56px;height:17px;background:#FFFFFF"></div>
<div class="a" style="left:19px;top:685px;width:1498px;height:1px;background:#AEAEB4"></div>
<div class="a" style="left:19px;top:686px;width:39px;height:17px;background:#C9D9F5"></div>
<div class="a" style="left:59px;top:686px;width:224px;height:17px;background:#C9D9F5"></div>
<div class="a" style="left:284px;top:686px;width:278px;height:17px;background:#C9D9F5"></div>
<div class="a" style="left:563px;top:686px;width:118px;height:17px;background:#E9F0FD"></div>
<div class="a" style="left:682px;top:686px;width:44px;height:17px;background:#E9F0FD"></div>
<div class="a" style="left:727px;top:686px;width:44px;height:17px;background:#E9F0FD"></div>
<div class="a" style="left:772px;top:686px;width:44px;height:17px;background:#E9F0FD"></div>
<div class="a" style="left:817px;top:686px;width:44px;height:17px;background:#E9F0FD"></div>
<div class="a" style="left:862px;top:686px;width:433px;height:17px;background:#E9F0FD"></div>
<div class="a" style="left:1296px;top:686px;width:71px;height:17px;background:#E9F0FD"></div>
<div class="a" style="left:1368px;top:686px;width:71px;height:17px;background:#E9F0FD"></div>
<div class="a" style="left:1440px;top:686px;width:56px;height:17px;background:#E9F0FD"></div>
<div class="a" style="left:19px;top:703px;width:1498px;height:1px;background:#AEAEB4"></div>
<div class="a" style="left:19px;top:704px;width:39px;height:17px;background:#E7E7F1"></div>
<div class="a" style="left:59px;top:704px;width:224px;height:17px;background:#E7E7F1"></div>
<div class="a" style="left:284px;top:704px;width:278px;height:17px;background:#E7E7F1"></div>
<div class="a" style="left:563px;top:704px;width:118px;height:17px;background:#FFFFFF"></div>
<div class="a" style="left:682px;top:704px;width:44px;height:17px;background:#FFFFFF"></div>
<div class="a" style="left:727px;top:704px;width:44px;height:17px;background:#FFFFFF"></div>
<div class="a" style="left:772px;top:704px;width:44px;height:17px;background:#FFFFFF"></div>
<div class="a" style="left:817px;top:704px;width:44px;height:17px;background:#FFFFFF"></div>
<div class="a" style="left:862px;top:704px;width:433px;height:17px;background:#FFFFFF"></div>
<div class="a" style="left:1296px;top:704px;width:71px;height:17px;background:#FFFFFF"></div>
<div class="a" style="left:1368px;top:704px;width:71px;height:17px;background:#FFFFFF"></div>
<div class="a" style="left:1440px;top:704px;width:56px;height:17px;background:#FFFFFF"></div>
<div class="a" style="left:19px;top:721px;width:1498px;height:1px;background:#AEAEB4"></div>
<div class="a" style="left:19px;top:722px;width:39px;height:17px;background:#C9D9F5"></div>
<div class="a" style="left:59px;top:722px;width:224px;height:17px;background:#C9D9F5"></div>
<div class="a" style="left:284px;top:722px;width:278px;height:17px;background:#C9D9F5"></div>
<div class="a" style="left:563px;top:722px;width:118px;height:17px;background:#E9F0FD"></div>
<div class="a" style="left:682px;top:722px;width:44px;height:17px;background:#E9F0FD"></div>
<div class="a" style="left:727px;top:722px;width:44px;height:17px;background:#E9F0FD"></div>
<div class="a" style="left:772px;top:722px;width:44px;height:17px;background:#E9F0FD"></div>
<div class="a" style="left:817px;top:722px;width:44px;height:17px;background:#E9F0FD"></div>
<div class="a" style="left:862px;top:722px;width:433px;height:17px;background:#E9F0FD"></div>
<div class="a" style="left:1296px;top:722px;width:71px;height:17px;background:#E9F0FD"></div>
<div class="a" style="left:1368px;top:722px;width:71px;height:17px;background:#E9F0FD"></div>
<div class="a" style="left:1440px;top:722px;width:56px;height:17px;background:#E9F0FD"></div>
<div class="a" style="left:19px;top:739px;width:1498px;height:1px;background:#AEAEB4"></div>
<div class="a" style="left:19px;top:740px;width:39px;height:17px;background:#E7E7F1"></div>
<div class="a" style="left:59px;top:740px;width:224px;height:17px;background:#E7E7F1"></div>
<div class="a" style="left:284px;top:740px;width:278px;height:17px;background:#E7E7F1"></div>
<div class="a" style="left:563px;top:740px;width:118px;height:17px;background:#FFFFFF"></div>
<div class="a" style="left:682px;top:740px;width:44px;height:17px;background:#FFFFFF"></div>
<div class="a" style="left:727px;top:740px;width:44px;height:17px;background:#FFFFFF"></div>
<div class="a" style="left:772px;top:740px;width:44px;height:17px;background:#FFFFFF"></div>
<div class="a" style="left:817px;top:740px;width:44px;height:17px;background:#FFFFFF"></div>
<div class="a" style="left:862px;top:740px;width:433px;height:17px;background:#FFFFFF"></div>
<div class="a" style="left:1296px;top:740px;width:71px;height:17px;background:#FFFFFF"></div>
<div class="a" style="left:1368px;top:740px;width:71px;height:17px;background:#FFFFFF"></div>
<div class="a" style="left:1440px;top:740px;width:56px;height:17px;background:#FFFFFF"></div>
<div class="a" style="left:19px;top:757px;width:1498px;height:1px;background:#AEAEB4"></div>
<div class="a" style="left:19px;top:758px;width:39px;height:17px;background:#C9D9F5"></div>
<div class="a" style="left:59px;top:758px;width:224px;height:17px;background:#C9D9F5"></div>
<div class="a" style="left:284px;top:758px;width:278px;height:17px;background:#C9D9F5"></div>
<div class="a" style="left:563px;top:758px;width:118px;height:17px;background:#E9F0FD"></div>
<div class="a" style="left:682px;top:758px;width:44px;height:17px;background:#E9F0FD"></div>
<div class="a" style="left:727px;top:758px;width:44px;height:17px;background:#E9F0FD"></div>
<div class="a" style="left:772px;top:758px;width:44px;height:17px;background:#E9F0FD"></div>
<div class="a" style="left:817px;top:758px;width:44px;height:17px;background:#E9F0FD"></div>
<div class="a" style="left:862px;top:758px;width:433px;height:17px;background:#E9F0FD"></div>
<div class="a" style="left:1296px;top:758px;width:71px;height:17px;background:#E9F0FD"></div>
<div class="a" style="left:1368px;top:758px;width:71px;height:17px;background:#E9F0FD"></div>
<div class="a" style="left:1440px;top:758px;width:56px;height:17px;background:#E9F0FD"></div>
<div class="a" style="left:19px;top:775px;width:1498px;height:1px;background:#AEAEB4"></div>
<div class="a" style="left:19px;top:776px;width:39px;height:17px;background:#E7E7F1"></div>
<div class="a" style="left:59px;top:776px;width:224px;height:17px;background:#E7E7F1"></div>
<div class="a" style="left:284px;top:776px;width:278px;height:17px;background:#E7E7F1"></div>
<div class="a" style="left:563px;top:776px;width:118px;height:17px;background:#FFFFFF"></div>
<div class="a" style="left:682px;top:776px;width:44px;height:17px;background:#FFFFFF"></div>
<div class="a" style="left:727px;top:776px;width:44px;height:17px;background:#FFFFFF"></div>
<div class="a" style="left:772px;top:776px;width:44px;height:17px;background:#FFFFFF"></div>
<div class="a" style="left:817px;top:776px;width:44px;height:17px;background:#FFFFFF"></div>
<div class="a" style="left:862px;top:776px;width:433px;height:17px;background:#FFFFFF"></div>
<div class="a" style="left:1296px;top:776px;width:71px;height:17px;background:#FFFFFF"></div>
<div class="a" style="left:1368px;top:776px;width:71px;height:17px;background:#FFFFFF"></div>
<div class="a" style="left:1440px;top:776px;width:56px;height:17px;background:#FFFFFF"></div>
<div class="a" style="left:19px;top:793px;width:1498px;height:1px;background:#AEAEB4"></div>
<div class="a" style="left:19px;top:794px;width:39px;height:17px;background:#C9D9F5"></div>
<div class="a" style="left:59px;top:794px;width:224px;height:17px;background:#C9D9F5"></div>
<div class="a" style="left:284px;top:794px;width:278px;height:17px;background:#C9D9F5"></div>
<div class="a" style="left:563px;top:794px;width:118px;height:17px;background:#E9F0FD"></div>
<div class="a" style="left:682px;top:794px;width:44px;height:17px;background:#E9F0FD"></div>
<div class="a" style="left:727px;top:794px;width:44px;height:17px;background:#E9F0FD"></div>
<div class="a" style="left:772px;top:794px;width:44px;height:17px;background:#E9F0FD"></div>
<div class="a" style="left:817px;top:794px;width:44px;height:17px;background:#E9F0FD"></div>
<div class="a" style="left:862px;top:794px;width:433px;height:17px;background:#E9F0FD"></div>
<div class="a" style="left:1296px;top:794px;width:71px;height:17px;background:#E9F0FD"></div>
<div class="a" style="left:1368px;top:794px;width:71px;height:17px;background:#E9F0FD"></div>
<div class="a" style="left:1440px;top:794px;width:56px;height:17px;background:#E9F0FD"></div>
<div class="a" style="left:19px;top:811px;width:1498px;height:1px;background:#AEAEB4"></div>
<div class="a" style="left:19px;top:812px;width:39px;height:17px;background:#E7E7F1"></div>
<div class="a" style="left:59px;top:812px;width:224px;height:17px;background:#FFFFFF"></div>
<div class="a" style="left:284px;top:812px;width:278px;height:17px;background:#FFFFFF"></div>
<div class="a" style="left:563px;top:812px;width:118px;height:17px;background:#E7E7F1"></div>
<div class="a" style="left:682px;top:812px;width:44px;height:17px;background:#E7E7F1"></div>
<div class="a" style="left:727px;top:812px;width:44px;height:17px;background:#E7E7F1"></div>
<div class="a" style="left:772px;top:812px;width:44px;height:17px;background:#E7E7F1"></div>
<div class="a" style="left:817px;top:812px;width:44px;height:17px;background:#E7E7F1"></div>
<div class="a" style="left:862px;top:812px;width:433px;height:17px;background:#FFFFFF"></div>
<div class="a" style="left:1296px;top:812px;width:71px;height:17px;background:#E7E7F1"></div>
<div class="a" style="left:1368px;top:812px;width:71px;height:17px;background:#E7E7F1"></div>
<div class="a" style="left:1440px;top:812px;width:56px;height:17px;background:#E7E7F1"></div>
<div class="a" style="left:19px;top:829px;width:1498px;height:1px;background:#AEAEB4"></div>
<div class="a" style="left:19px;top:830px;width:39px;height:17px;background:#C9D9F5"></div>
<div class="a" style="left:59px;top:830px;width:224px;height:17px;background:#E9F0FD"></div>
<div class="a" style="left:284px;top:830px;width:278px;height:17px;background:#E9F0FD"></div>
<div class="a" style="left:563px;top:830px;width:118px;height:17px;background:#C9D9F5"></div>
<div class="a" style="left:682px;top:830px;width:44px;height:17px;background:#C9D9F5"></div>
<div class="a" style="left:727px;top:830px;width:44px;height:17px;background:#C9D9F5"></div>
<div class="a" style="left:772px;top:830px;width:44px;height:17px;background:#C9D9F5"></div>
<div class="a" style="left:817px;top:830px;width:44px;height:17px;background:#C9D9F5"></div>
<div class="a" style="left:862px;top:830px;width:433px;height:17px;background:#E9F0FD"></div>
<div class="a" style="left:1296px;top:830px;width:71px;height:17px;background:#C9D9F5"></div>
<div class="a" style="left:1368px;top:830px;width:71px;height:17px;background:#C9D9F5"></div>
<div class="a" style="left:1440px;top:830px;width:56px;height:17px;background:#C9D9F5"></div>
<div class="a" style="left:19px;top:847px;width:1498px;height:1px;background:#AEAEB4"></div>
<div class="a" style="left:19px;top:848px;width:39px;height:17px;background:#E7E7F1"></div>
<div class="a" style="left:59px;top:848px;width:224px;height:17px;background:#FFFFFF"></div>
<div class="a" style="left:284px;top:848px;width:278px;height:17px;background:#FFFFFF"></div>
<div class="a" style="left:563px;top:848px;width:118px;height:17px;background:#E7E7F1"></div>
<div class="a" style="left:682px;top:848px;width:44px;height:17px;background:#E7E7F1"></div>
<div class="a" style="left:727px;top:848px;width:44px;height:17px;background:#E7E7F1"></div>
<div class="a" style="left:772px;top:848px;width:44px;height:17px;background:#E7E7F1"></div>
<div class="a" style="left:817px;top:848px;width:44px;height:17px;background:#E7E7F1"></div>
<div class="a" style="left:862px;top:848px;width:433px;height:17px;background:#FFFFFF"></div>
<div class="a" style="left:1296px;top:848px;width:71px;height:17px;background:#E7E7F1"></div>
<div class="a" style="left:1368px;top:848px;width:71px;height:17px;background:#E7E7F1"></div>
<div class="a" style="left:1440px;top:848px;width:56px;height:17px;background:#E7E7F1"></div>
<div class="a" style="left:19px;top:865px;width:1498px;height:1px;background:#AEAEB4"></div>
<div class="a" style="left:19px;top:866px;width:39px;height:17px;background:#C9D9F5"></div>
<div class="a" style="left:59px;top:866px;width:224px;height:17px;background:#E9F0FD"></div>
<div class="a" style="left:284px;top:866px;width:278px;height:17px;background:#E9F0FD"></div>
<div class="a" style="left:563px;top:866px;width:118px;height:17px;background:#C9D9F5"></div>
<div class="a" style="left:682px;top:866px;width:44px;height:17px;background:#C9D9F5"></div>
<div class="a" style="left:727px;top:866px;width:44px;height:17px;background:#C9D9F5"></div>
<div class="a" style="left:772px;top:866px;width:44px;height:17px;background:#C9D9F5"></div>
<div class="a" style="left:817px;top:866px;width:44px;height:17px;background:#C9D9F5"></div>
<div class="a" style="left:862px;top:866px;width:433px;height:17px;background:#E9F0FD"></div>
<div class="a" style="left:1296px;top:866px;width:71px;height:17px;background:#C9D9F5"></div>
<div class="a" style="left:1368px;top:866px;width:71px;height:17px;background:#C9D9F5"></div>
<div class="a" style="left:1440px;top:866px;width:56px;height:17px;background:#C9D9F5"></div>
<div class="a" style="left:19px;top:883px;width:1498px;height:1px;background:#AEAEB4"></div>
<div class="a" style="left:19px;top:884px;width:39px;height:17px;background:#E7E7F1"></div>
<div class="a" style="left:59px;top:884px;width:224px;height:17px;background:#FFFFFF"></div>
<div class="a" style="left:284px;top:884px;width:278px;height:17px;background:#FFFFFF"></div>
<div class="a" style="left:563px;top:884px;width:118px;height:17px;background:#E7E7F1"></div>
<div class="a" style="left:682px;top:884px;width:44px;height:17px;background:#E7E7F1"></div>
<div class="a" style="left:727px;top:884px;width:44px;height:17px;background:#E7E7F1"></div>
<div class="a" style="left:772px;top:884px;width:44px;height:17px;background:#E7E7F1"></div>
<div class="a" style="left:817px;top:884px;width:44px;height:17px;background:#E7E7F1"></div>
<div class="a" style="left:862px;top:884px;width:433px;height:17px;background:#FFFFFF"></div>
<div class="a" style="left:1296px;top:884px;width:71px;height:17px;background:#E7E7F1"></div>
<div class="a" style="left:1368px;top:884px;width:71px;height:17px;background:#E7E7F1"></div>
<div class="a" style="left:1440px;top:884px;width:56px;height:17px;background:#E7E7F1"></div>
<div class="a" style="left:19px;top:901px;width:1498px;height:1px;background:#AEAEB4"></div>
<div class="a" style="left:19px;top:902px;width:39px;height:17px;background:#C9D9F5"></div>
<div class="a" style="left:59px;top:902px;width:224px;height:17px;background:#C9D9F5"></div>
<div class="a" style="left:284px;top:902px;width:278px;height:17px;background:#C9D9F5"></div>
<div class="a" style="left:563px;top:902px;width:118px;height:17px;background:#C9D9F5"></div>
<div class="a" style="left:682px;top:902px;width:44px;height:17px;background:#C9D9F5"></div>
<div class="a" style="left:727px;top:902px;width:44px;height:17px;background:#C9D9F5"></div>
<div class="a" style="left:772px;top:902px;width:44px;height:17px;background:#C9D9F5"></div>
<div class="a" style="left:817px;top:902px;width:44px;height:17px;background:#C9D9F5"></div>
<div class="a" style="left:862px;top:902px;width:433px;height:17px;background:#C9D9F5"></div>
<div class="a" style="left:1296px;top:902px;width:71px;height:17px;background:#C9D9F5"></div>
<div class="a" style="left:1368px;top:902px;width:71px;height:17px;background:#C9D9F5"></div>
<div class="a" style="left:1440px;top:902px;width:56px;height:17px;background:#C9D9F5"></div>
<div class="a" style="left:19px;top:919px;width:1498px;height:1px;background:#AEAEB4"></div>
<div class="a" style="left:58px;top:452px;width:1px;height:461px;background:#AEAEB4"></div>
<div class="a" style="left:283px;top:452px;width:1px;height:461px;background:#AEAEB4"></div>
<div class="a" style="left:562px;top:452px;width:1px;height:461px;background:#AEAEB4"></div>
<div class="a" style="left:681px;top:452px;width:1px;height:461px;background:#AEAEB4"></div>
<div class="a" style="left:726px;top:452px;width:1px;height:461px;background:#AEAEB4"></div>
<div class="a" style="left:771px;top:452px;width:1px;height:461px;background:#AEAEB4"></div>
<div class="a" style="left:816px;top:452px;width:1px;height:461px;background:#AEAEB4"></div>
<div class="a" style="left:861px;top:452px;width:1px;height:461px;background:#AEAEB4"></div>
<div class="a" style="left:1295px;top:452px;width:1px;height:461px;background:#AEAEB4"></div>
<div class="a" style="left:1367px;top:452px;width:1px;height:461px;background:#AEAEB4"></div>
<div class="a" style="left:1439px;top:452px;width:1px;height:461px;background:#AEAEB4"></div>
<div class="a" style="left:1496px;top:452px;width:1px;height:461px;background:#AEAEB4"></div>
<div class="t" style="right:1494px;top:454px;color:#fff">1</div>
<div class="t" style="left:59px;top:454px;color:#fff">Fach</div>
<div class="t" style="left:284px;top:454px;color:#fff">Katholische Religionslehre</div>
<div class="t" style="left:563px;top:454px;color:#fff">Pflichtunt</div>
<div class="t" style="right:825px;top:454px;color:#fff">1</div>
<div class="t" style="right:780px;top:454px;color:#fff">1</div>
<div class="t" style="right:735px;top:454px;color:#fff">1</div>
<div class="t" style="right:690px;top:454px;color:#fff">1</div>
<div class="t" style="left:1297px;top:454px;color:#fff">1-6</div>
<div class="t" style="left:1369px;top:454px;color:#fff">1-6</div>
<div class="t" style="left:1441px;top:454px;color:#fff">Wort</div>
<div class="t" style="left:862px;top:454px;color:#fff">Katholische Religionslehre</div>
<div class="t" style="right:1494px;top:472px;">2</div>
<div class="t" style="left:59px;top:472px;">Fach</div>
<div class="t" style="left:284px;top:472px;">Evang.Religionslehre</div>
<div class="t" style="left:563px;top:472px;">Pflichtunt</div>
<div class="t" style="right:825px;top:472px;">1</div>
<div class="t" style="right:780px;top:472px;">1</div>
<div class="t" style="right:735px;top:472px;">1</div>
<div class="t" style="right:690px;top:472px;">1</div>
<div class="t" style="left:1297px;top:472px;">1-6</div>
<div class="t" style="left:1369px;top:472px;">1-6</div>
<div class="t" style="left:1441px;top:472px;">Wort</div>
<div class="t" style="left:862px;top:472px;">Evangelische Religionslehre</div>
<div class="t" style="right:1494px;top:490px;">3</div>
<div class="t" style="left:59px;top:490px;">Fach</div>
<div class="t" style="left:284px;top:490px;">Ethik</div>
<div class="t" style="left:563px;top:490px;">Pflichtunt</div>
<div class="t" style="right:825px;top:490px;">1</div>
<div class="t" style="right:780px;top:490px;">1</div>
<div class="t" style="right:735px;top:490px;">1</div>
<div class="t" style="right:690px;top:490px;">1</div>
<div class="t" style="left:1297px;top:490px;">1-6</div>
<div class="t" style="left:1369px;top:490px;">1-6</div>
<div class="t" style="left:1441px;top:490px;">Wort</div>
<div class="t" style="left:862px;top:490px;">Ethik</div>
<div class="t" style="right:1494px;top:508px;">4</div>
<div class="t" style="left:59px;top:508px;">Fach</div>
<div class="t" style="left:284px;top:508px;">Gesch.m.Gem.-Kunde</div>
<div class="t" style="left:563px;top:508px;">Pflichtunt</div>
<div class="t" style="right:825px;top:508px;">1</div>
<div class="t" style="right:780px;top:508px;">1</div>
<div class="t" style="right:735px;top:508px;">1</div>
<div class="t" style="right:690px;top:508px;">1</div>
<div class="t" style="left:1297px;top:508px;">1-6</div>
<div class="t" style="left:1369px;top:508px;">1-6</div>
<div class="t" style="left:1441px;top:508px;">Wort</div>
<div class="t" style="left:862px;top:508px;">Geschichte mit Gemeinschaftskunde</div>
<div class="t" style="right:1494px;top:526px;">5</div>
<div class="t" style="left:59px;top:526px;">Fach</div>
<div class="t" style="left:284px;top:526px;">Deutsch mit Betriebl. Komm.</div>
<div class="t" style="left:563px;top:526px;">Pflichtunt</div>
<div class="t" style="right:825px;top:526px;">1</div>
<div class="t" style="right:780px;top:526px;">1</div>
<div class="t" style="right:735px;top:526px;">1</div>
<div class="t" style="right:690px;top:526px;">1</div>
<div class="t" style="left:1297px;top:526px;">1-6</div>
<div class="t" style="left:1369px;top:526px;">1-6</div>
<div class="t" style="left:1441px;top:526px;">Wort</div>
<div class="t" style="left:862px;top:526px;">Deutsch mit BetrieblicherKommunikation</div>
<div class="t" style="right:1494px;top:544px;">6</div>
<div class="t" style="left:59px;top:544px;">Fach</div>
<div class="t" style="left:284px;top:544px;">Englisch</div>
<div class="t" style="left:563px;top:544px;">Pflichtunt</div>
<div class="t" style="right:825px;top:544px;">1</div>
<div class="t" style="right:780px;top:544px;">1</div>
<div class="t" style="right:735px;top:544px;">1</div>
<div class="t" style="right:690px;top:544px;">1</div>
<div class="t" style="left:1297px;top:544px;">1-6</div>
<div class="t" style="left:1369px;top:544px;">1-6</div>
<div class="t" style="left:1441px;top:544px;">Wort</div>
<div class="t" style="left:862px;top:544px;">Englisch</div>
<div class="t" style="right:1494px;top:562px;">7</div>
<div class="t" style="left:59px;top:562px;">Fach</div>
<div class="t" style="left:284px;top:562px;">Mathematik</div>
<div class="t" style="left:563px;top:562px;">Pflichtunt</div>
<div class="t" style="right:825px;top:562px;">1</div>
<div class="t" style="right:780px;top:562px;">1</div>
<div class="t" style="right:735px;top:562px;">1</div>
<div class="t" style="right:690px;top:562px;">1</div>
<div class="t" style="left:1297px;top:562px;">1-6</div>
<div class="t" style="left:1369px;top:562px;">1-6</div>
<div class="t" style="left:1441px;top:562px;">Wort</div>
<div class="t" style="left:862px;top:562px;">Mathematik</div>
<div class="t" style="right:1494px;top:580px;">8</div>
<div class="t" style="left:59px;top:580px;">Fach</div>
<div class="t" style="left:284px;top:580px;">Biol./Gesundheitsl.</div>
<div class="t" style="left:563px;top:580px;">Pflichtunt</div>
<div class="t" style="right:825px;top:580px;">1</div>
<div class="t" style="right:780px;top:580px;">1</div>
<div class="t" style="right:735px;top:580px;">1</div>
<div class="t" style="right:690px;top:580px;">1</div>
<div class="t" style="left:1297px;top:580px;">1-6</div>
<div class="t" style="left:1369px;top:580px;">1-6</div>
<div class="t" style="left:1441px;top:580px;">Wort</div>
<div class="t" style="left:862px;top:580px;">Biologie mit Gesundheitslehre</div>
<div class="t" style="right:1494px;top:598px;">9</div>
<div class="t" style="left:59px;top:598px;">Fach</div>
<div class="t" style="left:284px;top:598px;">Ernährungsl.u.Diätetik</div>
<div class="t" style="left:563px;top:598px;">Pflichtunt</div>
<div class="t" style="right:825px;top:598px;">1</div>
<div class="t" style="right:780px;top:598px;">1</div>
<div class="t" style="right:735px;top:598px;">1</div>
<div class="t" style="right:690px;top:598px;">1</div>
<div class="t" style="left:1297px;top:598px;">1-6</div>
<div class="t" style="left:1369px;top:598px;">1-6</div>
<div class="t" style="left:1441px;top:598px;">Wort</div>
<div class="t" style="left:862px;top:598px;">Ernährungslehre und Diätetik</div>
<div class="t" style="right:1494px;top:616px;">10</div>
<div class="t" style="left:59px;top:616px;">Fach</div>
<div class="t" style="left:284px;top:616px;">Pflege</div>
<div class="t" style="left:563px;top:616px;">Pflichtunt</div>
<div class="t" style="right:825px;top:616px;">1</div>
<div class="t" style="right:780px;top:616px;">1</div>
<div class="t" style="right:735px;top:616px;">1</div>
<div class="t" style="right:690px;top:616px;">1</div>
<div class="t" style="left:1297px;top:616px;">1-6</div>
<div class="t" style="left:1369px;top:616px;">1-6</div>
<div class="t" style="left:1441px;top:616px;">Wort</div>
<div class="t" style="left:862px;top:616px;">Pflege</div>
<div class="t" style="right:1494px;top:634px;">11</div>
<div class="t" style="left:59px;top:634px;">Fach</div>
<div class="t" style="left:284px;top:634px;">Wirtschaft und Recht</div>
<div class="t" style="left:563px;top:634px;">Pflichtunt</div>
<div class="t" style="right:825px;top:634px;">1</div>
<div class="t" style="right:780px;top:634px;">1</div>
<div class="t" style="right:735px;top:634px;">1</div>
<div class="t" style="right:690px;top:634px;">1</div>
<div class="t" style="left:1297px;top:634px;">1-6</div>
<div class="t" style="left:1369px;top:634px;">1-6</div>
<div class="t" style="left:1441px;top:634px;">Wort</div>
<div class="t" style="left:862px;top:634px;">Wirtschaft und Recht</div>
<div class="t" style="right:1494px;top:652px;">12</div>
<div class="t" style="left:59px;top:652px;">Fach</div>
<div class="t" style="left:284px;top:652px;">Daten- u. Textverarbeitung</div>
<div class="t" style="left:563px;top:652px;">Pflichtunt</div>
<div class="t" style="right:825px;top:652px;">1</div>
<div class="t" style="right:780px;top:652px;">1</div>
<div class="t" style="right:735px;top:652px;">1</div>
<div class="t" style="right:690px;top:652px;">1</div>
<div class="t" style="left:1297px;top:652px;">1-6</div>
<div class="t" style="left:1369px;top:652px;">1-6</div>
<div class="t" style="left:1441px;top:652px;">Wort</div>
<div class="t" style="left:862px;top:652px;">Daten- und Textverarbeitung</div>
<div class="t" style="right:1494px;top:670px;">13</div>
<div class="t" style="left:59px;top:670px;">Fach</div>
<div class="t" style="left:284px;top:670px;">Projektkompetenz</div>
<div class="t" style="left:563px;top:670px;">Pflichtunt</div>
<div class="t" style="right:825px;top:670px;">1</div>
<div class="t" style="right:780px;top:670px;">1</div>
<div class="t" style="right:735px;top:670px;">1</div>
<div class="t" style="right:690px;top:670px;">1</div>
<div class="t" style="left:1297px;top:670px;">1-6</div>
<div class="t" style="left:1369px;top:670px;">1-6</div>
<div class="t" style="left:1441px;top:670px;">Wort</div>
<div class="t" style="left:862px;top:670px;">Projektkompetenz</div>
<div class="t" style="right:1494px;top:688px;">14</div>
<div class="t" style="left:59px;top:688px;">Fach</div>
<div class="t" style="left:284px;top:688px;">Pflegeübungen und -dokumentation</div>
<div class="t" style="left:563px;top:688px;">Wahlpflichtunt</div>
<div class="t" style="right:825px;top:688px;">1</div>
<div class="t" style="right:780px;top:688px;">1</div>
<div class="t" style="right:735px;top:688px;">1</div>
<div class="t" style="right:690px;top:688px;">1</div>
<div class="t" style="left:1297px;top:688px;">1-6</div>
<div class="t" style="left:1369px;top:688px;">1-6</div>
<div class="t" style="left:1441px;top:688px;">Wort</div>
<div class="t" style="left:862px;top:688px;">Pflegeübungen und -dokumentation</div>
<div class="t" style="right:1494px;top:706px;">15</div>
<div class="t" style="left:59px;top:706px;">Fach</div>
<div class="t" style="left:284px;top:706px;">Labortechnologie</div>
<div class="t" style="left:563px;top:706px;">Wahlpflichtunt</div>
<div class="t" style="right:825px;top:706px;">1</div>
<div class="t" style="right:780px;top:706px;">1</div>
<div class="t" style="right:735px;top:706px;">1</div>
<div class="t" style="right:690px;top:706px;">1</div>
<div class="t" style="left:1297px;top:706px;">1-6</div>
<div class="t" style="left:1369px;top:706px;">1-6</div>
<div class="t" style="left:1441px;top:706px;">Wort</div>
<div class="t" style="left:862px;top:706px;">Labortechnologie</div>
<div class="t" style="right:1494px;top:724px;">16</div>
<div class="t" style="left:59px;top:724px;">Fach</div>
<div class="t" style="left:284px;top:724px;">Berufsbezogene Projekte</div>
<div class="t" style="left:563px;top:724px;">Wahlpflichtunt</div>
<div class="t" style="right:825px;top:724px;">1</div>
<div class="t" style="right:780px;top:724px;">1</div>
<div class="t" style="right:735px;top:724px;">1</div>
<div class="t" style="right:690px;top:724px;">1</div>
<div class="t" style="left:1297px;top:724px;">1-6</div>
<div class="t" style="left:1369px;top:724px;">1-6</div>
<div class="t" style="left:1441px;top:724px;">Wort</div>
<div class="t" style="left:862px;top:724px;">Berufsbezogene Projekte</div>
<div class="t" style="right:1494px;top:742px;">17</div>
<div class="t" style="left:59px;top:742px;">Fach</div>
<div class="t" style="left:284px;top:742px;">Pädagogik und Psychologie</div>
<div class="t" style="left:563px;top:742px;">Wahlpflichtunt</div>
<div class="t" style="right:825px;top:742px;">1</div>
<div class="t" style="right:780px;top:742px;">1</div>
<div class="t" style="right:735px;top:742px;">1</div>
<div class="t" style="right:690px;top:742px;">1</div>
<div class="t" style="left:1297px;top:742px;">1-6</div>
<div class="t" style="left:1369px;top:742px;">1-6</div>
<div class="t" style="left:1441px;top:742px;">Wort</div>
<div class="t" style="left:862px;top:742px;">Pädagogik und Psychologie</div>
<div class="t" style="right:1494px;top:760px;">18</div>
<div class="t" style="left:59px;top:760px;">Fach</div>
<div class="t" style="left:284px;top:760px;">Deutsch</div>
<div class="t" style="left:563px;top:760px;">Wahlpflichtunt</div>
<div class="t" style="right:825px;top:760px;">1</div>
<div class="t" style="right:780px;top:760px;">1</div>
<div class="t" style="right:735px;top:760px;">1</div>
<div class="t" style="right:690px;top:760px;">1</div>
<div class="t" style="left:1297px;top:760px;">1-6</div>
<div class="t" style="left:1369px;top:760px;">1-6</div>
<div class="t" style="left:1441px;top:760px;">Wort</div>
<div class="t" style="left:862px;top:760px;">Deutsch</div>
<div class="t" style="right:1494px;top:778px;">19</div>
<div class="t" style="left:59px;top:778px;">Fach</div>
<div class="t" style="left:284px;top:778px;">Psychologie</div>
<div class="t" style="left:563px;top:778px;">Wahlpflichtunt</div>
<div class="t" style="right:825px;top:778px;">1</div>
<div class="t" style="right:780px;top:778px;">1</div>
<div class="t" style="right:735px;top:778px;">1</div>
<div class="t" style="right:690px;top:778px;">1</div>
<div class="t" style="left:1297px;top:778px;">1-6</div>
<div class="t" style="left:1369px;top:778px;">1-6</div>
<div class="t" style="left:1441px;top:778px;">Wort</div>
<div class="t" style="left:862px;top:778px;">Psychologie</div>
<div class="t" style="right:1494px;top:796px;">20</div>
<div class="t" style="left:59px;top:796px;">Fach</div>
<div class="t" style="left:284px;top:796px;">Sport</div>
<div class="t" style="left:563px;top:796px;">Wahlunt</div>
<div class="t" style="right:825px;top:796px;">1</div>
<div class="t" style="right:780px;top:796px;">1</div>
<div class="t" style="right:735px;top:796px;">1</div>
<div class="t" style="right:690px;top:796px;">1</div>
<div class="t" style="left:1297px;top:796px;">1-6</div>
<div class="t" style="left:1369px;top:796px;">1-6</div>
<div class="t" style="left:1441px;top:796px;">Wort</div>
<div class="t" style="left:862px;top:796px;">Sport</div>
<div class="t" style="right:1494px;top:814px;">21</div>
<div class="t" style="left:59px;top:814px;">Bemerkungen</div>
<div class="t" style="left:284px;top:814px;">Bemerkungen</div>
<div class="t" style="left:862px;top:814px;">Bemerkungen</div>
<div class="t" style="right:1494px;top:832px;">22</div>
<div class="t" style="left:59px;top:832px;">gefährdet</div>
<div class="t" style="left:284px;top:832px;">gefährdet</div>
<div class="t" style="left:862px;top:832px;">gefährdet</div>
<div class="t" style="right:1494px;top:850px;">23</div>
<div class="t" style="left:59px;top:850px;">Abgang</div>
<div class="t" style="left:284px;top:850px;">Abgang</div>
<div class="t" style="left:862px;top:850px;">Abgang</div>
<div class="t" style="right:1494px;top:868px;">24</div>
<div class="t" style="left:59px;top:868px;">Lob / Preis</div>
<div class="t" style="left:284px;top:868px;">Lob / Preis</div>
<div class="t" style="left:862px;top:868px;">Lob / Preis</div>
<div class="t" style="right:1494px;top:886px;">25</div>
<div class="t" style="left:59px;top:886px;">Durchschnitt 1</div>
<div class="t" style="left:284px;top:886px;">Durchschnitt 1</div>
<div class="t" style="left:862px;top:886px;">Durchschnitt 1</div>
<svg style="left:0;top:0" width="1551" height="913" viewBox="0 0 1551 913">
<rect x="1517.6" y="418.6" width="15.8" height="32.8" rx="2.5" fill="url(#gcfg)" stroke="#1C3C74" stroke-width="1.2"/><path d="M1521.5 438.7 V430.7 H1529.5 V435.2" fill="none" stroke="#000" stroke-width="1.1"/><path d="M1521.5 433.2 H1529.5 M1525.5 430.7 V433.2" stroke="#000" stroke-width="1"/><path d="M1521.5 438.7 H1524" stroke="#000" stroke-width="1"/><path d="M1524.5 435.7 H1531 L1527.75 439.2Z" fill="#000"/>
<rect x="1497.5" y="452.5" width="18" height="16" rx="2.2" fill="url(#gdel)" stroke="#1A3A72" stroke-width="1.1"/><path d="M1501.9 455.9 L1511.1 465.1 M1511.1 455.9 L1501.9 465.1" stroke="url(#gredx)" stroke-width="3" stroke-linecap="square"/>
<rect x="1497.5" y="470.5" width="18" height="16" rx="2.2" fill="url(#gdel)" stroke="#1A3A72" stroke-width="1.1"/><path d="M1501.9 473.9 L1511.1 483.1 M1511.1 473.9 L1501.9 483.1" stroke="url(#gredx)" stroke-width="3" stroke-linecap="square"/>
<rect x="1497.5" y="488.5" width="18" height="16" rx="2.2" fill="url(#gdel)" stroke="#1A3A72" stroke-width="1.1"/><path d="M1501.9 491.9 L1511.1 501.1 M1511.1 491.9 L1501.9 501.1" stroke="url(#gredx)" stroke-width="3" stroke-linecap="square"/>
<rect x="1497.5" y="506.5" width="18" height="16" rx="2.2" fill="url(#gdel)" stroke="#1A3A72" stroke-width="1.1"/><path d="M1501.9 509.9 L1511.1 519.1 M1511.1 509.9 L1501.9 519.1" stroke="url(#gredx)" stroke-width="3" stroke-linecap="square"/>
<rect x="1497.5" y="524.5" width="18" height="16" rx="2.2" fill="url(#gdel)" stroke="#1A3A72" stroke-width="1.1"/><path d="M1501.9 527.9 L1511.1 537.1 M1511.1 527.9 L1501.9 537.1" stroke="url(#gredx)" stroke-width="3" stroke-linecap="square"/>
<rect x="1497.5" y="542.5" width="18" height="16" rx="2.2" fill="url(#gdel)" stroke="#1A3A72" stroke-width="1.1"/><path d="M1501.9 545.9 L1511.1 555.1 M1511.1 545.9 L1501.9 555.1" stroke="url(#gredx)" stroke-width="3" stroke-linecap="square"/>
<rect x="1497.5" y="560.5" width="18" height="16" rx="2.2" fill="url(#gdel)" stroke="#1A3A72" stroke-width="1.1"/><path d="M1501.9 563.9 L1511.1 573.1 M1511.1 563.9 L1501.9 573.1" stroke="url(#gredx)" stroke-width="3" stroke-linecap="square"/>
<rect x="1497.5" y="578.5" width="18" height="16" rx="2.2" fill="url(#gdel)" stroke="#1A3A72" stroke-width="1.1"/><path d="M1501.9 581.9 L1511.1 591.1 M1511.1 581.9 L1501.9 591.1" stroke="url(#gredx)" stroke-width="3" stroke-linecap="square"/>
<rect x="1497.5" y="596.5" width="18" height="16" rx="2.2" fill="url(#gdel)" stroke="#1A3A72" stroke-width="1.1"/><path d="M1501.9 599.9 L1511.1 609.1 M1511.1 599.9 L1501.9 609.1" stroke="url(#gredx)" stroke-width="3" stroke-linecap="square"/>
<rect x="1497.5" y="614.5" width="18" height="16" rx="2.2" fill="url(#gdel)" stroke="#1A3A72" stroke-width="1.1"/><path d="M1501.9 617.9 L1511.1 627.1 M1511.1 617.9 L1501.9 627.1" stroke="url(#gredx)" stroke-width="3" stroke-linecap="square"/>
<rect x="1497.5" y="632.5" width="18" height="16" rx="2.2" fill="url(#gdel)" stroke="#1A3A72" stroke-width="1.1"/><path d="M1501.9 635.9 L1511.1 645.1 M1511.1 635.9 L1501.9 645.1" stroke="url(#gredx)" stroke-width="3" stroke-linecap="square"/>
<rect x="1497.5" y="650.5" width="18" height="16" rx="2.2" fill="url(#gdel)" stroke="#1A3A72" stroke-width="1.1"/><path d="M1501.9 653.9 L1511.1 663.1 M1511.1 653.9 L1501.9 663.1" stroke="url(#gredx)" stroke-width="3" stroke-linecap="square"/>
<rect x="1497.5" y="668.5" width="18" height="16" rx="2.2" fill="url(#gdel)" stroke="#1A3A72" stroke-width="1.1"/><path d="M1501.9 671.9 L1511.1 681.1 M1511.1 671.9 L1501.9 681.1" stroke="url(#gredx)" stroke-width="3" stroke-linecap="square"/>
<rect x="1497.5" y="686.5" width="18" height="16" rx="2.2" fill="url(#gdel)" stroke="#1A3A72" stroke-width="1.1"/><path d="M1501.9 689.9 L1511.1 699.1 M1511.1 689.9 L1501.9 699.1" stroke="url(#gredx)" stroke-width="3" stroke-linecap="square"/>
<rect x="1497.5" y="704.5" width="18" height="16" rx="2.2" fill="url(#gdel)" stroke="#1A3A72" stroke-width="1.1"/><path d="M1501.9 707.9 L1511.1 717.1 M1511.1 707.9 L1501.9 717.1" stroke="url(#gredx)" stroke-width="3" stroke-linecap="square"/>
<rect x="1497.5" y="722.5" width="18" height="16" rx="2.2" fill="url(#gdel)" stroke="#1A3A72" stroke-width="1.1"/><path d="M1501.9 725.9 L1511.1 735.1 M1511.1 725.9 L1501.9 735.1" stroke="url(#gredx)" stroke-width="3" stroke-linecap="square"/>
<rect x="1497.5" y="740.5" width="18" height="16" rx="2.2" fill="url(#gdel)" stroke="#1A3A72" stroke-width="1.1"/><path d="M1501.9 743.9 L1511.1 753.1 M1511.1 743.9 L1501.9 753.1" stroke="url(#gredx)" stroke-width="3" stroke-linecap="square"/>
<rect x="1497.5" y="758.5" width="18" height="16" rx="2.2" fill="url(#gdel)" stroke="#1A3A72" stroke-width="1.1"/><path d="M1501.9 761.9 L1511.1 771.1 M1511.1 761.9 L1501.9 771.1" stroke="url(#gredx)" stroke-width="3" stroke-linecap="square"/>
<rect x="1497.5" y="776.5" width="18" height="16" rx="2.2" fill="url(#gdel)" stroke="#1A3A72" stroke-width="1.1"/><path d="M1501.9 779.9 L1511.1 789.1 M1511.1 779.9 L1501.9 789.1" stroke="url(#gredx)" stroke-width="3" stroke-linecap="square"/>
<rect x="1497.5" y="794.5" width="18" height="16" rx="2.2" fill="url(#gdel)" stroke="#1A3A72" stroke-width="1.1"/><path d="M1501.9 797.9 L1511.1 807.1 M1511.1 797.9 L1501.9 807.1" stroke="url(#gredx)" stroke-width="3" stroke-linecap="square"/>
<rect x="1497.5" y="812.5" width="18" height="16" rx="2.2" fill="url(#gdel)" stroke="#1A3A72" stroke-width="1.1"/><path d="M1501.9 815.9 L1511.1 825.1 M1511.1 815.9 L1501.9 825.1" stroke="url(#gredx)" stroke-width="3" stroke-linecap="square"/>
<rect x="1497.5" y="830.5" width="18" height="16" rx="2.2" fill="url(#gdel)" stroke="#1A3A72" stroke-width="1.1"/><path d="M1501.9 833.9 L1511.1 843.1 M1511.1 833.9 L1501.9 843.1" stroke="url(#gredx)" stroke-width="3" stroke-linecap="square"/>
<rect x="1497.5" y="848.5" width="18" height="16" rx="2.2" fill="url(#gdel)" stroke="#1A3A72" stroke-width="1.1"/><path d="M1501.9 851.9 L1511.1 861.1 M1511.1 851.9 L1501.9 861.1" stroke="url(#gredx)" stroke-width="3" stroke-linecap="square"/>
<rect x="1497.5" y="866.5" width="18" height="16" rx="2.2" fill="url(#gdel)" stroke="#1A3A72" stroke-width="1.1"/><path d="M1501.9 869.9 L1511.1 879.1 M1511.1 869.9 L1501.9 879.1" stroke="url(#gredx)" stroke-width="3" stroke-linecap="square"/>
<rect x="1497.5" y="884.5" width="18" height="16" rx="2.2" fill="url(#gdel)" stroke="#1A3A72" stroke-width="1.1"/><path d="M1501.9 887.9 L1511.1 897.1 M1511.1 887.9 L1501.9 897.1" stroke="url(#gredx)" stroke-width="3" stroke-linecap="square"/>
<rect x="1497.5" y="902.5" width="18" height="16" rx="2" fill="#F6F6FA" stroke="#D8D8E0" stroke-width="1"/><path d="M1502.1 906.1 L1510.9 914.9 M1510.9 906.1 L1502.1 914.9" stroke="#8E8E8E" stroke-width="2.9" stroke-linecap="square"/>
<rect x="1518.5" y="452.5" width="15" height="16" rx="2" fill="url(#gsbtn)" stroke="#C4D0EC" stroke-width="1"/>
<path d="M1521.8 463.5 L1525.9 459.2 L1530 463.5" fill="none" stroke="#3C5A82" stroke-width="2"/>
<rect x="1518.5" y="470.5" width="15" height="428" rx="2" fill="url(#gthumb)" stroke="#B8C8EC" stroke-width="1"/>
<path d="M1522.5 681.5 H1529.5" stroke="#FFFFFF" stroke-width="1"/>
<path d="M1522.5 680.5 H1529.5" stroke="#9AAAD4" stroke-width="0.8"/>
<path d="M1522.5 683.5 H1529.5" stroke="#FFFFFF" stroke-width="1"/>
<path d="M1522.5 682.5 H1529.5" stroke="#9AAAD4" stroke-width="0.8"/>
<path d="M1522.5 685.5 H1529.5" stroke="#FFFFFF" stroke-width="1"/>
<path d="M1522.5 684.5 H1529.5" stroke="#9AAAD4" stroke-width="0.8"/>
<path d="M1522.5 687.5 H1529.5" stroke="#FFFFFF" stroke-width="1"/>
<path d="M1522.5 686.5 H1529.5" stroke="#9AAAD4" stroke-width="0.8"/>
<rect x="1518.5" y="901.5" width="15" height="16" rx="2" fill="url(#gsbtn)" stroke="#C4D0EC" stroke-width="1"/>
<path d="M1521.8 906.5 L1525.9 910.8 L1530 906.5" fill="none" stroke="#3C5A82" stroke-width="2"/>
</svg>
<div class="a" style="left:52px;top:0px;width:225px;height:27px;border:2px solid #FF0000;box-sizing:border-box;box-shadow:2px 3px 4px rgba(0,0,0,0.35)"></div>
</body></html>
